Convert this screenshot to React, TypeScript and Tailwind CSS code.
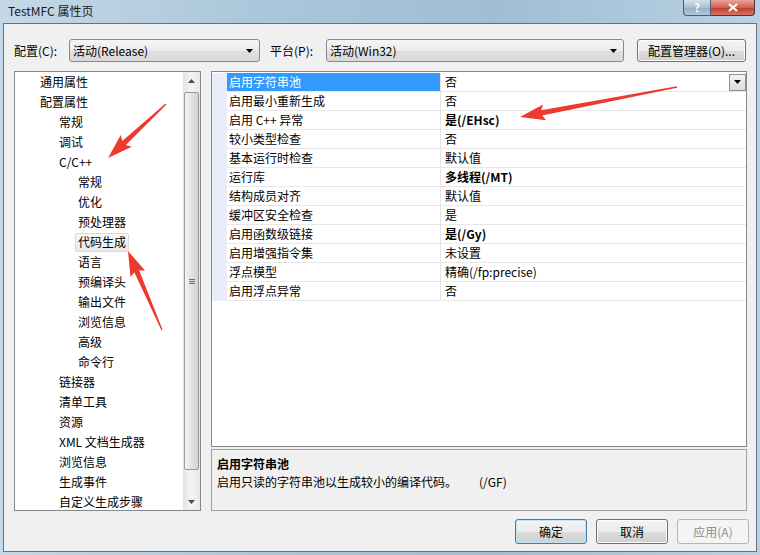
import React from 'react'

type TreeItem = [string, number, boolean?]

const tree: TreeItem[] = [
  ['通用属性', 0],
  ['配置属性', 0],
  ['常规', 1],
  ['调试', 1],
  ['C/C++', 1],
  ['常规', 2],
  ['优化', 2],
  ['预处理器', 2],
  ['代码生成', 2, true],
  ['语言', 2],
  ['预编译头', 2],
  ['输出文件', 2],
  ['浏览信息', 2],
  ['高级', 2],
  ['命令行', 2],
  ['链接器', 1],
  ['清单工具', 1],
  ['资源', 1],
  ['XML 文档生成器', 1],
  ['浏览信息', 1],
  ['生成事件', 1],
  ['自定义生成步骤', 1],
]

const indent = ['pl-[22px]', 'pl-[41px]', 'pl-[60px]']

const props: [string, string, boolean?][] = [
  ['启用字符串池', '否'],
  ['启用最小重新生成', '否'],
  ['启用 C++ 异常', '是(/EHsc)', true],
  ['较小类型检查', '否'],
  ['基本运行时检查', '默认值'],
  ['运行库', '多线程(/MT)', true],
  ['结构成员对齐', '默认值'],
  ['缓冲区安全检查', '是'],
  ['启用函数级链接', '是(/Gy)', true],
  ['启用增强指令集', '未设置'],
  ['浮点模型', '精确(/fp:precise)'],
  ['启用浮点异常', '否'],
]

function DownTri({ color = '#000' }: { color?: string }) {
  return (
    <svg width="7" height="4" viewBox="0 0 7 4">
      <path d="M0 0H7L3.5 4Z" fill={color} />
    </svg>
  )
}

function UpTri() {
  return (
    <svg width="7" height="4" viewBox="0 0 7 4">
      <path d="M0 4H7L3.5 0Z" fill="#4d4d4d" />
    </svg>
  )
}

function Combo({ text, width }: { text: string; width: string }) {
  return (
    <div
      className={`flex h-[23px] items-center justify-between rounded-[3px] border border-[#8a8a8a] bg-[linear-gradient(#f5f5f5,#ececec_50%,#e0e0e0_51%,#d9d9d9)] pl-[3px] pr-[6px] ${width}`}
    >
      <span className="leading-[16px]">{text}</span>
      <DownTri />
    </div>
  )
}

function Btn({ label, primary, disabled }: { label: string; primary?: boolean; disabled?: boolean }) {
  if (disabled) {
    return (
      <div className="flex h-[25px] w-[72px] items-center justify-center rounded-[3px] border border-[#b5b5b5] bg-[#f4f4f4] text-[#8d8d8d]">
        {label}
      </div>
    )
  }
  return (
    <div
      className={`flex h-[25px] w-[72px] items-center justify-center rounded-[3px] border bg-[linear-gradient(#f3f3f3,#ebebeb_50%,#dddddd_51%,#cfcfcf)] ${
        primary ? 'border-[#3c7fb1] shadow-[inset_0_0_0_1px_#bfe3f7]' : 'border-[#707070] shadow-[inset_0_0_0_1px_#fcfcfc]'
      }`}
    >
      {label}
    </div>
  )
}

function arrowPoints(x1: number, y1: number, x2: number, y2: number) {
  const dx = x2 - x1
  const dy = y2 - y1
  const len = Math.hypot(dx, dy)
  const ux = dx / len
  const uy = dy / len
  const nx = -uy
  const ny = ux
  const head = 22
  const bx = x2 - ux * head
  const by = y2 - uy * head
  const wx = x2 - ux * (head + 3)
  const wy = y2 - uy * (head + 3)
  const p = (x: number, y: number) => `${x.toFixed(1)},${y.toFixed(1)}`
  return [
    p(x1 + nx * 0.7, y1 + ny * 0.7),
    p(bx + nx * 2.6, by + ny * 2.6),
    p(wx + nx * 8, wy + ny * 8),
    p(x2, y2),
    p(wx - nx * 8, wy - ny * 8),
    p(bx - nx * 2.6, by - ny * 2.6),
    p(x1 - nx * 0.7, y1 - ny * 0.7),
  ].join(' ')
}

export default function App() {
  return (
    <div className="relative h-[555px] w-[760px] overflow-hidden bg-[linear-gradient(90deg,#c4d8e8,#aac6da_35%,#9fbed4_65%,#b9d1e3)] font-['Noto_Sans_CJK_SC','Noto_Sans',sans-serif] text-[12px] text-black">
      {/* title bar */}
      <div className="flex h-[23px] items-start justify-between">
        <span className="pl-[8px] pt-[2px] leading-[17px] text-[#1a1a1a]">TestMFC 属性页</span>
        <div className="mr-[5px] flex">
          <div className="flex h-[16px] w-[28px] items-center justify-center rounded-bl-[4px] border border-t-0 border-[#4c5d6e] bg-[linear-gradient(#d4e1ec,#a9bfd1_50%,#93aec4_51%,#b1c8da)] text-[11px] font-bold leading-none text-white">
            ?
          </div>
          <div className="flex h-[16px] w-[44px] items-center justify-center rounded-br-[4px] border border-l-0 border-t-0 border-[#4c3535] bg-[linear-gradient(#e8a59d,#d45f52_50%,#c23b2c_51%,#d77264)]">
            <svg width="10" height="9" viewBox="0 0 10 9">
              <path d="M1 1L9 8M9 1L1 8" stroke="#fff" strokeWidth="2.2" />
            </svg>
          </div>
        </div>
      </div>

      {/* client area */}
      <div className="mx-[3px] h-[529px] border border-[#5c7388] bg-[#f0f0f0]">
        {/* config row */}
        <div className="mt-[15px] flex h-[23px] items-center pl-[10px]">
          <span className="w-[55px]">配置(C):</span>
          <Combo text="活动(Release)" width="w-[191px]" />
          <span className="ml-[10px] w-[56px]">平台(P):</span>
          <Combo text="活动(Win32)" width="w-[298px]" />
          <div className="ml-[13px] flex h-[23px] w-[109px] items-center justify-center rounded-[3px] border border-[#707070] bg-[linear-gradient(#f3f3f3,#ebebeb_50%,#dddddd_51%,#cfcfcf)] shadow-[inset_0_0_0_1px_#fcfcfc]">
            配置管理器(O)...
          </div>
        </div>

        {/* main */}
        <div className="mt-[9px] flex h-[440px] pl-[10px]">
          {/* tree */}
          <div className="flex h-[440px] w-[187px] border border-[#828790] bg-white">
            <div className="h-full flex-1 overflow-hidden">
              {tree.map(([label, level, sel], i) => (
                <div key={i} className={`flex h-[20px] items-center ${indent[level]}`}>
                  <span
                    className={`flex h-[19px] items-center rounded-[2px] border px-[2px] leading-[16px] ${
                      sel ? 'border-[#d9d9d9] bg-[linear-gradient(#f8f8f8,#e8e8e8)]' : 'border-transparent'
                    }`}
                  >
                    {label}
                  </span>
                </div>
              ))}
            </div>
            {/* scrollbar */}
            <div className="flex w-[17px] flex-col bg-[linear-gradient(90deg,#e3e3e3,#f2f2f2_40%,#f2f2f2_60%,#e8e8e8)]">
              <div className="flex h-[17px] items-center justify-center">
                <UpTri />
              </div>
              <div className="mx-[1px] mt-[3px] flex h-[378px] items-center justify-center rounded-[2px] border border-[#9a9a9a] bg-[linear-gradient(90deg,#f4f4f4,#e2e2e2_50%,#d3d3d3)]">
                <div className="flex flex-col gap-[1px]">
                  <div className="h-[1px] w-[6px] bg-[#6e6e6e]" />
                  <div className="h-[1px] w-[6px] bg-[#6e6e6e]" />
                  <div className="h-[1px] w-[6px] bg-[#6e6e6e]" />
                </div>
              </div>
              <div className="flex-1" />
              <div className="flex h-[17px] items-center justify-center">
                <DownTri color="#4d4d4d" />
              </div>
            </div>
          </div>

          {/* right side */}
          <div className="ml-[10px] flex w-[536px] flex-col">
            <div className="h-[376px] border border-[#828790] bg-white">
              <div className="mt-[1px] flex">
                <div className="w-[15px] bg-[#eaedf7]" />
                <div className="flex-1">
                  {props.map(([name, value, bold], i) => (
                    <div key={i} className="flex h-[19px] border-b border-[#e8e8e8]">
                      <div
                        className={`flex w-[214px] items-center border-r border-[#e4e4e4] pl-[2px] leading-[16px] ${
                          i === 0 ? 'bg-[#3399ff] text-white' : ''
                        }`}
                      >
                        {name}
                      </div>
                      <div className="flex flex-1 items-center justify-between pl-[4px]">
                        <span className={`leading-[16px] ${bold ? 'font-bold' : ''}`}>{value}</span>
                        {i === 0 && (
                          <div className="flex h-[17px] w-[17px] items-center justify-center border border-[#8f8f8f] bg-[linear-gradient(#f4f4f4,#dcdcdc)]">
                            <DownTri />
                          </div>
                        )}
                      </div>
                    </div>
                  ))}
                </div>
              </div>
            </div>
            <div className="mt-[2px] h-[62px] border border-[#a0a0a0] bg-[#f0f0f0] pl-[5px] pt-[5px]">
              <div className="font-bold leading-[18px]">启用字符串池</div>
              <div className="leading-[18px]">
                启用只读的字符串池以生成较小的编译代码。
                <span className="ml-[22px]">(/GF)</span>
              </div>
            </div>
          </div>
        </div>

        {/* buttons */}
        <div className="mt-[8px] flex justify-end gap-[9px] pr-[7px]">
          <Btn label="确定" primary />
          <Btn label="取消" />
          <Btn label="应用(A)" disabled />
        </div>
      </div>

      {/* red annotation arrows */}
      <svg className="pointer-events-none absolute left-0 top-0" width="760" height="555">
        <polygon points={arrowPoints(166, 104, 108, 158)} fill="#ee3a2e" />
        <polygon points={arrowPoints(162, 330, 128, 251)} fill="#ee3a2e" />
        <polygon points={arrowPoints(677, 87, 520, 117)} fill="#ee3a2e" />
      </svg>
    </div>
  )
}
